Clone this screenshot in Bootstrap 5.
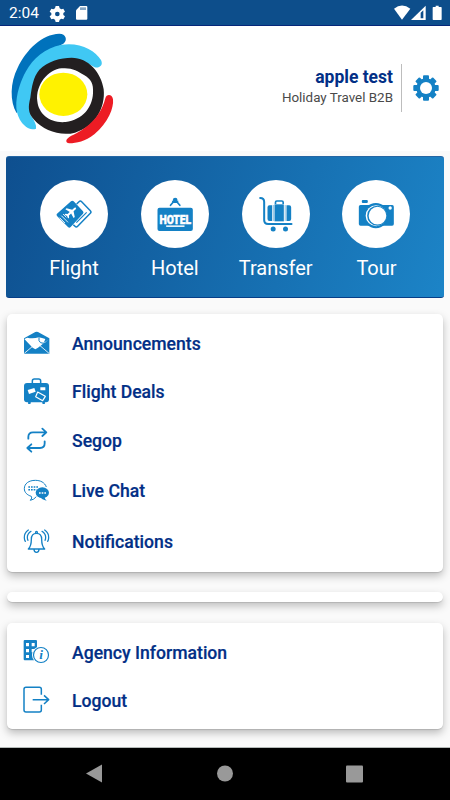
<!DOCTYPE html>
<html lang="en">
<head>
<meta charset="utf-8">
<meta name="viewport" content="width=device-width, initial-scale=1">
<title>Holiday Travel B2B</title>
<link href="https://cdn.jsdelivr.net/npm/bootstrap@5.3.0/dist/css/bootstrap.min.css" rel="stylesheet">
<style>
  body { font-family: Roboto, "Liberation Sans", sans-serif; background: #fafafa; height: 800px; overflow: hidden; }
  svg { display: block; flex: none; }
  .status-bar { height: 26px; background: #0d4e8b; border-bottom: 1px solid #06277a; padding-left: 9px; font-size: 15.5px; }
  .clock { padding-top: 3px; }
  .status-icons { margin-left: 9px; }
  .top-header { height: 125px; }
  .user-block { margin-top: 38px; height: 48px; border-right: 1px solid #bdbdbd; padding-right: 8px; margin-right: 11px; }
  .user-name { font-size: 17.5px; line-height: 21px; font-weight: 700; color: #022f86; margin-top: 3px; }
  .user-org { font-size: 13.4px; line-height: 20px; color: #4a4a4a; }
  .header-gear { margin: 49px 11px 0 0; }
  .services { margin: 5px 6px 0; height: 142px; border-radius: 3px; padding: 24px 17px 0 17.7px; background: linear-gradient(108deg, #0e4f8f 0%, #1c84c7 100%); border-bottom: 1px solid #063e88; border-top: 1px solid #2466a4; }
  .service { width: 100.8px; color: #fff; font-size: 20px; line-height: 24px; margin-top: -1px; }
  .disc { width: 68px; height: 68px; background: #fff; margin-bottom: 8px; }
  .menu-card { margin-left: 7px; margin-right: 7px; border-radius: 5px; box-shadow: 0 4px 8px rgba(0,0,0,.25), 0 1px 1px rgba(0,0,0,.12); }
  .menu-row { height: 48px; padding-left: 15px; gap: 20px; font-size: 17.6px; font-weight: 500; color: #022f86; -webkit-text-stroke: .2px #022f86; }
  .menu-row.h50 { height: 50px; }
  .menu-row.h52 { height: 52px; }
  .c1 { margin-top: 16px; padding-top: 6px; height: 258px; }
  .c2 { margin-top: 20px; height: 10px; }
  .c3 { margin-top: 21px; padding-top: 6px; height: 106px; }
  .nav-keys { margin-top: 18px; height: 53px; background: #000; border-top: 1px solid #b4bab8; }
  .f { fill: #1481c5; }
  .s { fill: none; stroke: #1481c5; }
  .w { fill: #fff; }
  .ws { fill: none; stroke: #fff; }
  .info-i { font-family: "Liberation Serif", serif; font-style: italic; font-weight: 700; -webkit-text-stroke: 0; }
</style>
</head>
<body>
<div class="status-bar d-flex align-items-center text-white">
  <span class="clock">2:04</span>
  <svg class="status-icons" width="42" height="24" viewBox="147 4 126 72">
    <path fill="#fff" fill-rule="evenodd" d="M170 19h10l2 7 5 3 6-2 5 9-5 4v6l5 4-5 9-6-2-5 3-2 7h-10l-2-7-5-3-6 2-5-9 5-4v-6l-5-4 5-9 6 2 5-3zM175 36a7 7 0 1 0 0 14 7 7 0 0 0 0-14z"/>
    <path fill="#fff" d="M243 19h19q3 0 3 3v35q0 3-3 3h-28q-3 0-3-3V32z"/>
    <path stroke="#0d4e8b" stroke-width="3" d="M246 23v8M252 23v8M258 23v8"/>
  </svg>
  <svg class="ms-auto" width="56" height="24" viewBox="507 3 168 72">
    <path fill="#fff" d="M507 26Q531 7 556 26L531 59z"/>
    <path fill="#fff" d="M558 60L602 17V60z"/>
    <path fill="#0d4e8b" d="M587 38l8-7v24h-8z"/>
    <path fill="#fff" d="M632 17h9v4h7q2 0 2 2v35q0 2-2 2h-23q-2 0-2-2V23q0-2 2-2h7z"/>
  </svg>
</div>

<header class="top-header bg-white d-flex">
  <svg width="125" height="125" viewBox="0 0 375 375">
    <path fill="#0072bc" d="M50 262C29 225 30 170 53 125C80 70 125 25 178 23C198 23 204 43 190 53C145 75 85 130 50 262z"/>
    <path fill="#40c8f4" d="M104 310C75 311 52 280 49 245C47 205 64 160 78 136C98 98 135 65 185 56C240 48 285 72 303 102C311 118 298 127 284 124L250 105L195 100L130 130L103 175L92 225L92 268Q112 297 108 308z"/>
    <path fill="#231f20" d="M215 95C265 95 304 140 311 190C317 245 285 303 225 320C180 332 130 312 103 282C82 260 85 240 91 215C96 180 99 155 118 131C144 105 182 95 215 95z"/>
    <path fill="#fff" d="M185 127C215 124 232 135 252 147C273 160 281 172 279 202C277 245 248 282 197 288C150 292 116 265 112 226C106 176 145 130 185 127z"/>
    <ellipse cx="190" cy="205" rx="72" ry="65" fill="#fff200"/>
    <path fill="#ed1c24" d="M316 217C320 202 337 205 339 220C342 245 325 290 283 325C255 347 230 352 208 352C195 350 197 340 208 333C240 317 297 290 316 217z"/>
  </svg>
  <div class="user-block ms-auto text-end">
    <div class="user-name">apple test</div>
    <div class="user-org">Holiday Travel B2B</div>
  </div>
  <svg class="header-gear" width="26" height="26" viewBox="0 0 26 26">
    <g class="f"><rect x="10" y="0.3" width="6" height="25.4" rx="1"/><rect x="0.3" y="10" width="25.4" height="6" rx="1"/><g transform="rotate(45 13 13)"><rect x="10" y="0.6" width="6" height="24.8" rx="1"/><rect x="0.6" y="10" width="24.8" height="6" rx="1"/></g><circle cx="13" cy="13" r="9.7"/></g>
    <circle class="w" cx="13" cy="13" r="6"/>
  </svg>
</header>

<section class="services d-flex text-center">
  <div class="service">
    <div class="disc rounded-circle mx-auto">
      <svg width="68" height="68" viewBox="119 90 204 204">
        <path class="s" stroke-width="4.5" stroke-linejoin="round" d="M229 162l7-7q4-4 8 0l26 27q4 4 0 8l-38 39q-4 4-8 0l-5-5"/>
        <path class="s" stroke-width="3.5" d="M228 218l31-31"/>
        <path class="f" d="M212 154q4-3 8 0l28 30q3 4 0 7l-37 40q-4 4-8 0l-33-33q-3-4 0-7z"/>
        <g transform="translate(214 185) rotate(47)"><path class="w" d="M-3-14q3-8 6 0v9l15 9v5L3 5v9l5 4v4l-8-3-8 3v-4l5-4V5l-15 4V4L-3-5z"/></g>
        <path class="ws" stroke-width="2.5" d="M178 203l16 16M183 197l20 20M188 192l10 10"/>
      </svg>
    </div>Flight
  </div>
  <div class="service">
    <div class="disc rounded-circle mx-auto">
      <svg width="68" height="68" viewBox="421.5 90 204 204">
        <circle class="f" cx="524" cy="150" r="7"/>
        <path class="s" stroke-width="5" stroke-linecap="round" d="M519 155l-9 11M529 155l9 11"/>
        <path class="f" d="M514 152h20l-2 7h-16z"/>
        <rect class="f" x="471" y="173" width="106" height="70" rx="6"/>
        <text x="477" y="221" fill="#fff" stroke="#fff" stroke-width="1.5" font-size="41" font-weight="900" textLength="95" lengthAdjust="spacingAndGlyphs">HOTEL</text>
        <rect x="497" y="226" width="55" height="5" fill="#e6f2fa"/>
      </svg>
    </div>Hotel
  </div>
  <div class="service">
    <div class="disc rounded-circle mx-auto">
      <svg width="68" height="68" viewBox="49.5 90 204 204">
        <path class="s" stroke-width="6" stroke-linecap="round" stroke-linejoin="round" d="M104 144q12 0 12 12v54q0 12 12 12h70"/>
        <path class="f" d="M140 166v47h-8q-6 0-6-6v-35q0-6 6-6zM183 166h8q6 0 6 6v35q0 6-6 6h-8z"/>
        <rect class="f" x="147" y="163" width="28" height="51"/>
        <path class="s" stroke-width="1.5" d="M143.500 165v48M179 165v48"/>
        <path class="s" stroke-width="5" d="M150 162v-5q0-4 4-4h15q4 0 4 4v5"/>
        <circle class="f" cx="143" cy="237" r="7.500"/><circle class="f" cx="180" cy="237" r="7.500"/>
      </svg>
    </div>Transfer
  </div>
  <div class="service">
    <div class="disc rounded-circle mx-auto">
      <svg width="68" height="68" viewBox="351.500 90 204 204">
        <rect class="f" x="411" y="150" width="18" height="9" rx="3"/>
        <rect class="f" x="402" y="165" width="105" height="62" rx="5"/>
        <circle class="f" cx="453" cy="197" r="38"/>
        <circle class="w" cx="454" cy="197" r="31.500"/>
        <circle class="f" cx="457" cy="197" r="30"/>
        <circle class="w" cx="458" cy="197" r="26.500"/>
        <circle class="w" cx="496" cy="174" r="5"/>
      </svg>
    </div>Tour
  </div>
</section>

<main>
  <div class="menu-card bg-white c1">
    <div class="menu-row d-flex align-items-center">
      <svg width="30" height="30" viewBox="66 63 90 90">
        <path class="f" d="M72 91L106 72q4-2 8 0l34 19v46H72z"/>
        <path class="w" d="M73 93l9-4q16 4 35-1l5 12 12 5 12-11-32 25-8 5-8-5z"/>
        <path class="w" d="M116 88l5 13q5 5 11 2l4-10q-10-3-20-5z"/>
        <path class="s" stroke-width="3" d="M117 88v10q2 8 14 8"/>
        <path class="ws" stroke-width="2.500" d="M73 136l27-23M147 136l-27-23"/>
      </svg>Announcements
    </div>
    <div class="menu-row d-flex align-items-center">
      <svg width="30" height="30" viewBox="66 207 90 90">
        <path class="s" stroke-width="4.500" d="M97 227v-8q0-6 6-6h13q6 0 6 6v8"/>
        <rect class="f" x="72" y="225" width="75" height="58" rx="9"/>
        <rect class="f" x="84" y="281" width="8" height="7" rx="2"/><rect class="f" x="127" y="281" width="8" height="7" rx="2"/>
        <path class="w" d="M83 246l20-6 4 11-20 7zM121 238h15v9h-15z"/>
        <path class="ws" stroke-width="3.500" stroke-linejoin="round" d="M113 252l23 13-8 13-21-12z"/>
      </svg>Flight Deals
    </div>
    <div class="menu-row h50 d-flex align-items-center">
      <svg width="30" height="30" viewBox="66 354 90 90">
        <path class="s" stroke-width="5.500" stroke-linecap="round" stroke-linejoin="round" d="M85 392v-5q0-14 14-14h39M127 362l12 11-12 11M134 400v6q0 14-14 14H82M94 409l-12 11 12 11"/>
      </svg>Segop
    </div>
    <div class="menu-row h50 d-flex align-items-center">
      <svg width="30" height="30" viewBox="66 33 90 90">
        <path class="s" stroke-width="3" stroke-linejoin="round" d="M139 66C134 52 121 46 106 46C86 46 73 56 73 71C73 82 81 90 94 94Q98 98 91 106Q102 104 109 95"/>
        <path class="s" stroke-width="4.500" stroke-dasharray="5 3" d="M85 66h29M85 74h25"/>
        <ellipse class="f" cx="127" cy="83" rx="20" ry="16"/>
        <path class="f" d="M119 94h14q1 8 7 13-14-2-21-13z"/>
        <path class="ws" stroke-width="4" stroke-dasharray="5 3" d="M117 84h21"/>
      </svg>Live Chat
    </div>
    <div class="menu-row h52 d-flex align-items-center">
      <svg width="30" height="30" viewBox="66 186 90 90">
        <path class="s" stroke-width="4" stroke-linejoin="round" d="M85 252c9-8 9-17 9-29q0-18 15.500-18T125 223c0 12 0 21 9 29zM102 253q0 9 7.500 9t7.500-9"/>
        <circle class="s" stroke-width="3.500" cx="109.500" cy="202" r="3"/>
        <path class="s" stroke-width="3.800" stroke-linecap="round" d="M85 195q-13 9-12 23 0 6 3 11M93 199q-11 7-11 18 0 6 2 9M134 195q13 9 12 23 0 6-3 11M126 199q11 7 11 18 0 6-2 9"/>
      </svg>Notifications
    </div>
  </div>

  <div class="menu-card bg-white c2"></div>

  <div class="menu-card bg-white c3">
    <div class="menu-row d-flex align-items-center">
      <svg width="30" height="30" viewBox="66 69 90 90">
        <rect class="f" x="71" y="75" width="40" height="61" rx="3"/>
        <path class="w" d="M78 84h9v10h-9zM95 84h9v10h-9zM78 102h9v10h-9zM95 102h9v10h-9zM78 120h9v9h-9z"/>
        <circle class="w" cx="123" cy="120" r="27"/>
        <circle class="w" cx="123" cy="120" r="22.500" stroke="#1481c5" stroke-width="3.500"/>
        <text class="f info-i" x="123" y="133" text-anchor="middle" font-size="40">i</text>
      </svg>Agency Information
    </div>
    <div class="menu-row d-flex align-items-center">
      <svg width="30" height="30" viewBox="66 213 90 90">
        <path class="s" stroke-width="4.500" stroke-linejoin="round" d="M124 239v-16q0-6-6-6H78q-6 0-6 6v62q0 6 6 6h40q6 0 6-6v-16M98 254h47M132 241l14 13-14 13"/>
      </svg>Logout
    </div>
  </div>
</main>

<footer class="nav-keys d-flex align-items-center">
  <svg width="450" height="30" viewBox="0 1 450 30" fill="#999">
    <path d="M86 15.500L102 6.500V24.500z"/>
    <circle cx="225" cy="15.500" r="8"/>
    <rect x="346" y="7.500" width="17" height="17" rx="1"/>
  </svg>
</footer>
<script src="https://cdn.jsdelivr.net/npm/bootstrap@5.3.0/dist/js/bootstrap.bundle.min.js"></script>
</body>
</html>
